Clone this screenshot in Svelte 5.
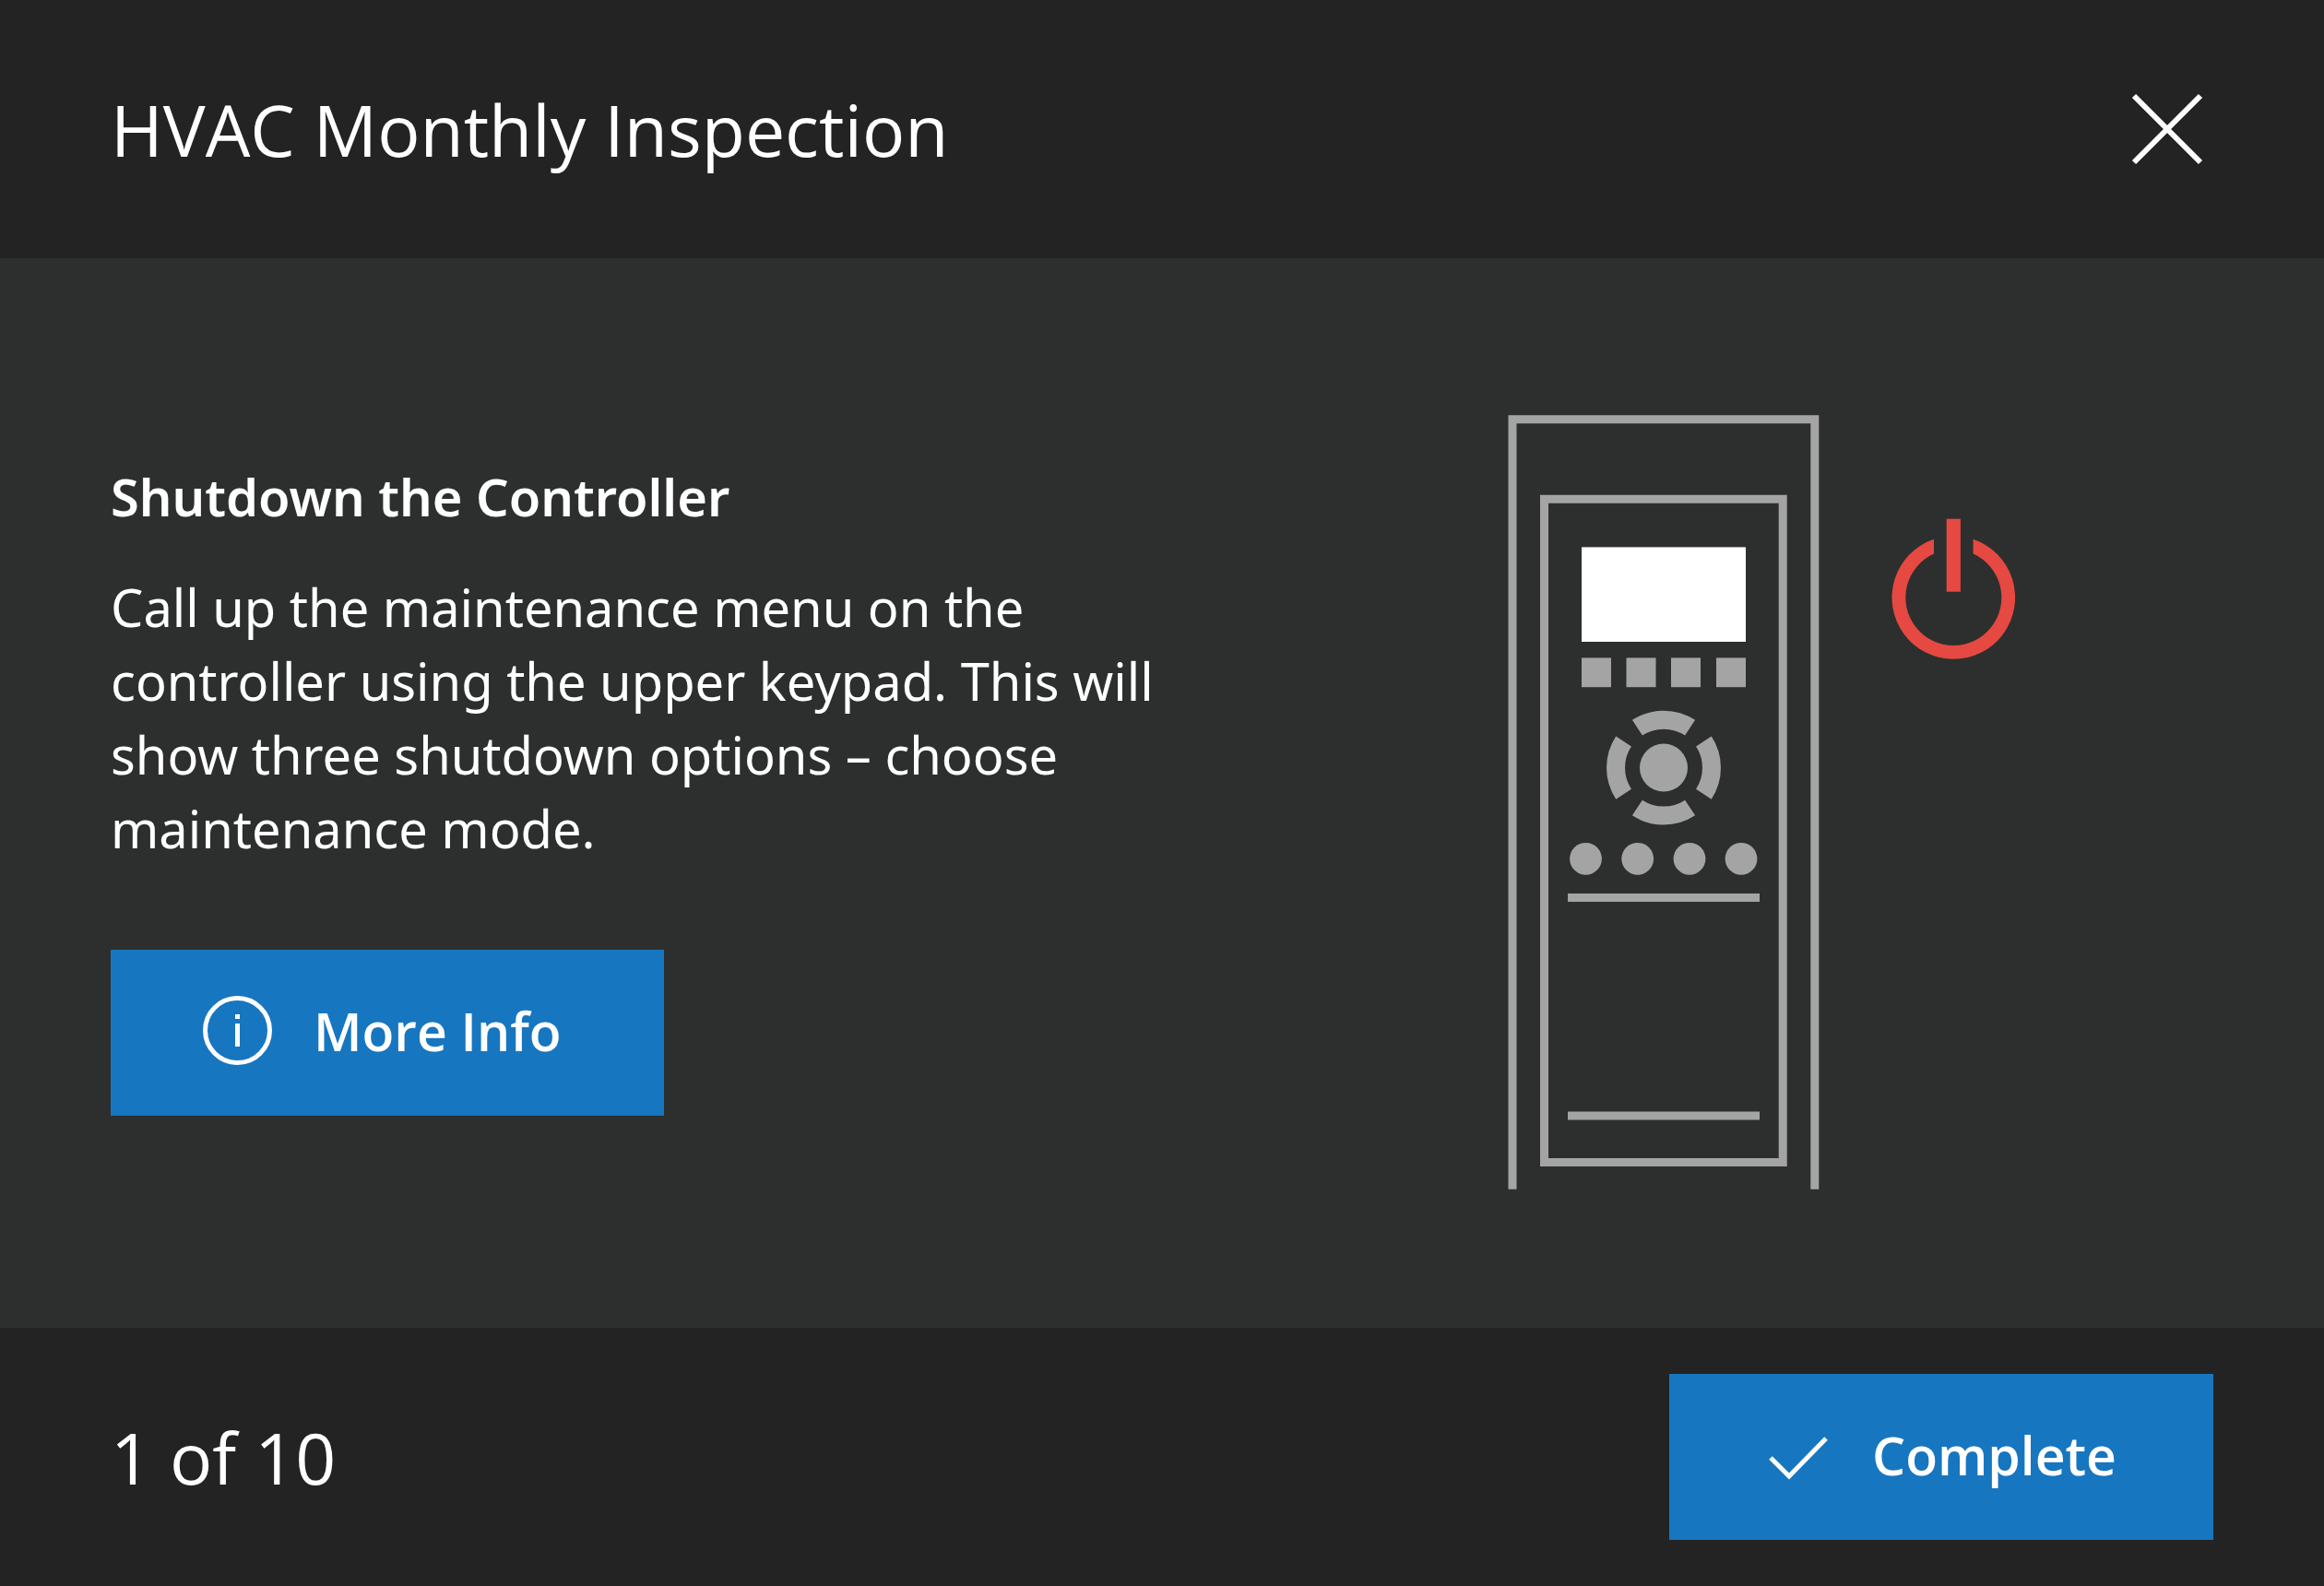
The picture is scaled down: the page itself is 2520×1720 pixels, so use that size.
<script>
  const title = 'HVAC Monthly Inspection';
  const total = 10;
  let step = $state(1);
  const squares = [1715, 1763.5, 1812, 1861];
  const dots = [1719.5, 1775.7, 1832, 1888];

  function complete() {
    if (step < total) step += 1;
  }
</script>

<main class="task">
  <header class="bar">
    <h1>{title}</h1>
    <button class="close" type="button" aria-label="Close">
      <svg width="100" height="100" viewBox="0 0 100 100" aria-hidden="true">
        <path d="M14 14 86 86M86 14 14 86" fill="none" stroke="#fff" stroke-width="6" />
      </svg>
    </button>
  </header>

  <section class="content">
    <div class="copy">
      <h2>Shutdown the Controller</h2>
      <p>
        Call up the maintenance menu on the controller using the upper keypad. This will show three
        shutdown options – choose maintenance mode.
      </p>
      <button class="action info" type="button">
        <svg width="76" height="76" viewBox="0 0 76 76" aria-hidden="true">
          <circle cx="37.5" cy="37.5" r="35" fill="none" stroke="#fff" stroke-width="5" />
          <path d="M35 20h5v5h-5zM35 30h5v25h-5z" fill="#fff" />
        </svg>
        <span>More Info</span>
      </button>
    </div>

    <div class="figure">
      <svg width="550" height="840" viewBox="1635 450 550 840" role="img" aria-label="Controller with power symbol">
        <g fill="none" stroke="#a4a4a4" stroke-width="9">
          <path d="M1640 1289.7V454.8H1967.8V1289.7" />
          <path d="M1674.5 541.2H1933.2V1260.5H1674.5Z" />
          <path d="M1700 973.5H1908M1700 1210H1908" />
        </g>
        <rect x="1715" y="593.4" width="178" height="102.6" fill="#fff" />
        <g fill="#a4a4a4">
          {#each squares as x}
            <rect {x} y="713.4" width="32" height="31.8" />
          {/each}
          {#each dots as cx}
            <circle {cx} cy="931.3" r="17.4" />
          {/each}
          <circle cx="1804" cy="832.6" r="26" />
        </g>
        <g fill="none" stroke="#a4a4a4" stroke-width="20">
          <path d="M1775.4 789.2A52 52 0 0 1 1832.6 789.2" />
          <path d="M1847.4 804A52 52 0 0 1 1847.4 861.2" />
          <path d="M1832.6 876A52 52 0 0 1 1775.4 876" />
          <path d="M1760.6 861.2A52 52 0 0 1 1760.6 804" />
        </g>
        <g fill="#e54941">
          <path d="M2097 584.7A66.8 66.8 0 1 0 2139.6 584.7V600.6A52 52 0 1 1 2097 600.6Z" />
          <rect x="2110.7" y="562.7" width="15.2" height="79" />
        </g>
      </svg>
    </div>
  </section>

  <footer class="bar">
    <span class="progress">{step} of {total}</span>
    <button class="action done" type="button" onclick={complete}>
      <svg width="66" height="50" viewBox="0 0 66 50" aria-hidden="true">
        <path d="M4 28 24 48 64 7" fill="none" stroke="#fff" stroke-width="5" />
      </svg>
      <span>Complete</span>
    </button>
  </footer>
</main>

<style>
  :global(body) {
    margin: 0;
    background: #2d2f2e;
  }

  .task {
    display: grid;
    grid-template-rows: auto 1fr auto;
    min-height: 100vh;
    color: #fff;
    font-family: 'Open Sans', 'Noto Sans', sans-serif;
  }

  .bar {
    display: flex;
    align-items: center;
    justify-content: space-between;
    box-sizing: border-box;
    min-height: 280px;
    padding: 0 120px;
    background: #232323;
  }

  h1,
  .progress {
    margin: 0;
    padding-top: 2px;
    font-size: 77px;
    font-weight: 400;
    line-height: 104px;
  }

  svg {
    flex-shrink: 0;
    overflow: visible;
  }

  button {
    border: 0;
    color: inherit;
    font: inherit;
    cursor: pointer;
  }

  .close {
    display: flex;
    padding: 0;
    background: none;
  }

  .content {
    display: grid;
    grid-template-columns: 1fr 1fr;
    align-items: center;
  }

  .copy {
    padding: 0 0 12px 120px;
  }

  h2,
  p {
    margin: 0;
    font-family: 'Noto Sans', 'Open Sans', sans-serif;
    font-size: 56px;
    line-height: 80px;
  }

  h2 {
    margin-bottom: 40px;
    font-weight: 600;
  }

  p {
    margin-bottom: 92px;
  }

  .action {
    display: flex;
    align-items: center;
    min-height: 180px;
    background: #1776c0;
    font-size: 57px;
    font-weight: 600;
    line-height: 80px;
  }

  .info {
    gap: 44px;
    width: 600px;
    padding: 0 100px 4px;
  }

  .done {
    gap: 48px;
    width: 590px;
    padding: 0 106px 4px;
  }

  .figure {
    display: flex;
    justify-content: center;
    padding: 20px 0 0 40px;
  }
</style>
